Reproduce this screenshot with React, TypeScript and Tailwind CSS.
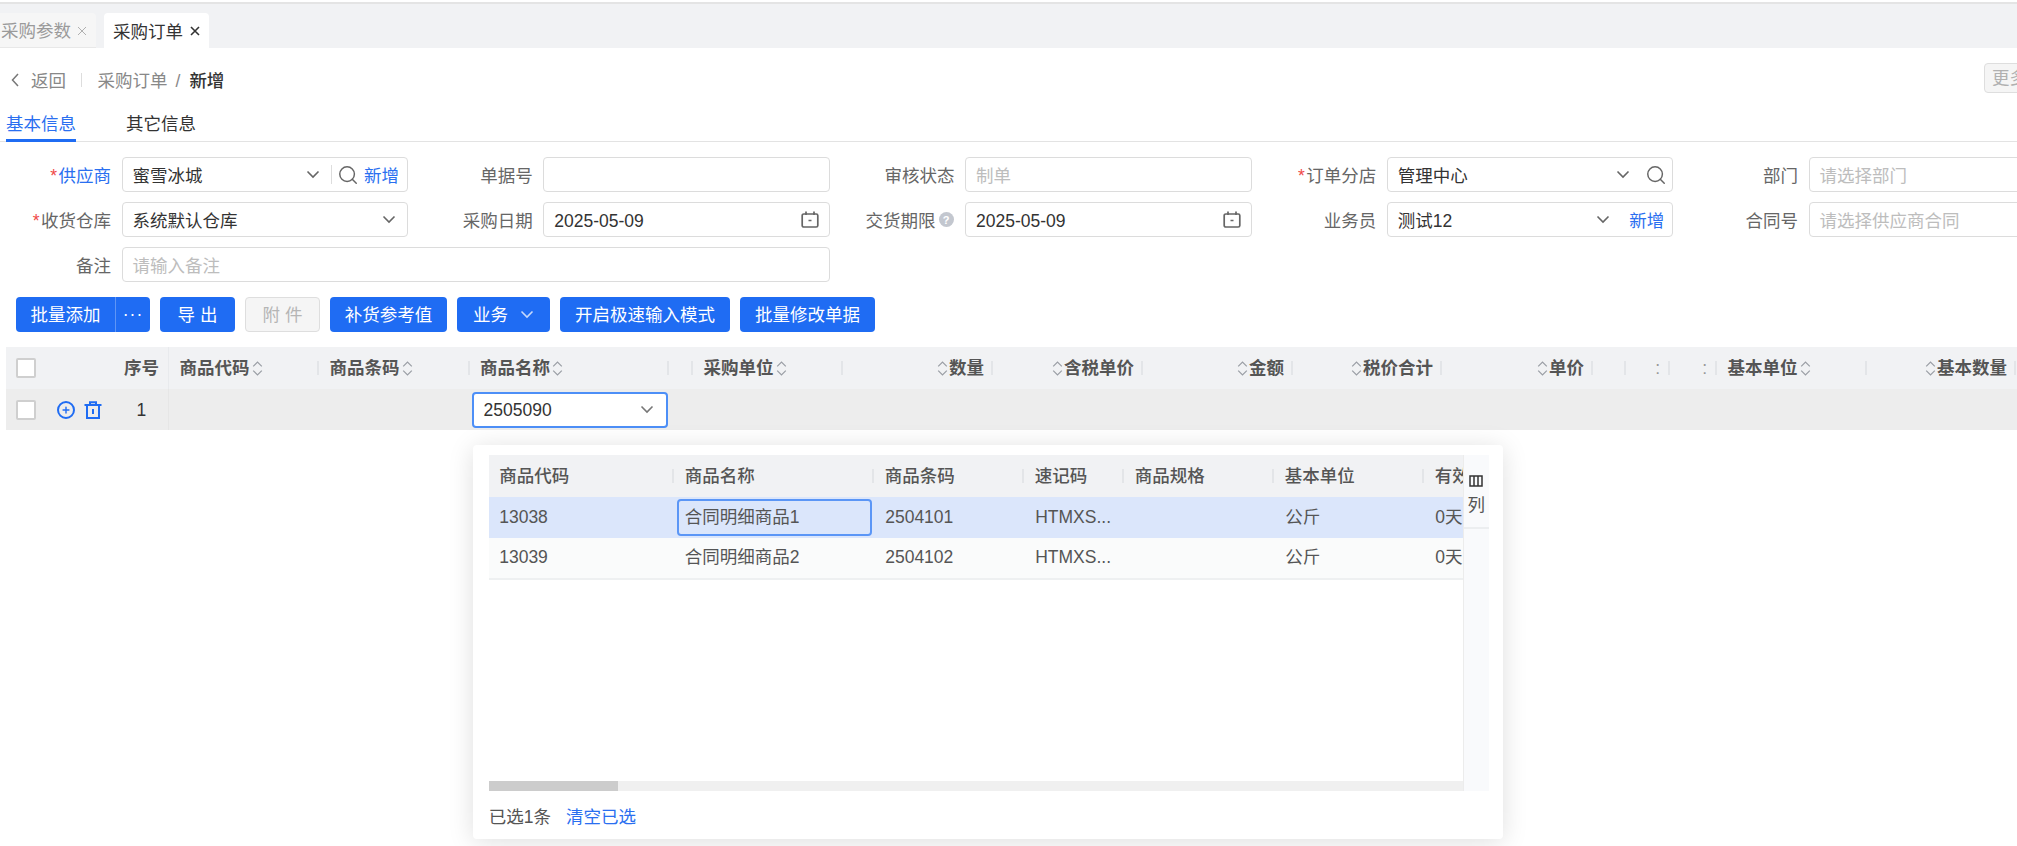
import React from "react";
import { Search, Plus } from "lucide-react";

const Chev = ({ className = "" }: { className?: string }) => (
  <svg viewBox="0 0 14 9" className={`w-[14px] h-[9px] shrink-0 ${className}`} fill="none" stroke="currentColor" strokeWidth="1.6">
    <path d="M1.5 1.5 7 7l5.5-5.5" />
  </svg>
);

const Sort = () => (
  <svg viewBox="0 0 11 17" className="w-[11px] h-[17px] shrink-0 text-[#9a9ea5]" fill="none" stroke="currentColor" strokeWidth="1.2">
    <path d="M1.2 6.4 5.5 2 9.8 6.4" />
    <path d="M1.2 10.6 5.5 15 9.8 10.6" />
  </svg>
);

const Calendar = () => (
  <svg viewBox="0 0 18 17" className="w-[18px] h-[17px] mb-[2px] shrink-0 text-[#666]" fill="none" stroke="currentColor" strokeWidth="1.7">
    <rect x="1.2" y="3" width="15.6" height="13" rx="1.6" />
    <path d="M5 0.5v3.5M13 0.5v3.5M7.5 9.5h3" />
  </svg>
);

const Lens = ({ className = "" }: { className?: string }) => (
  <Search className={`w-[22px] h-[22px] mb-[2px] shrink-0 ${className}`} strokeWidth={1.6} />
);

const X = ({ className = "" }: { className?: string }) => (
  <svg viewBox="0 0 10 10" className={`w-[10px] h-[10px] shrink-0 ${className}`} fill="none" stroke="currentColor">
    <path d="M1 1l8 8M9 1 1 9" />
  </svg>
);

const Checkbox = () => <div className="w-[20px] h-[20px] shrink-0 rounded-[2px] border-2 border-[#cfcfcf] bg-white" />;

const Input = ({ className = "", children }: { className?: string; children?: React.ReactNode }) => (
  <div className={`h-[35px] flex items-center rounded-[4px] border border-[#dcdcdc] bg-white pl-[10px] pt-[2px] text-[#333] ${className}`}>{children}</div>
);

const Placeholder = ({ children }: { children: React.ReactNode }) => <span className="text-[#bdbdbd]">{children}</span>;

const Field = ({ label, required, blue, hint, wide, children }: { label: string; required?: boolean; blue?: boolean; hint?: boolean; wide?: boolean; children?: React.ReactNode }) => (
  <div className={`flex items-center ${wide ? "col-span-2" : ""}`}>
    <div className={`w-[111px] pt-[2px] shrink-0 flex justify-end items-center whitespace-nowrap ${blue ? "text-[#2a6ff0]" : "text-[#666]"}`}>
      {required && <span className="text-[#f04848] mr-[1.5px]">*</span>}
      {label}
      {hint && (
        <span className="ml-[3px] mr-[1px] mb-[2px] w-[15px] h-[15px] rounded-full bg-[#c3c7cf] text-white text-[11px] font-bold flex items-center justify-center">?</span>
      )}
    </div>
    <div className={`ml-[10.5px] ${wide ? "w-[708px]" : "w-[286.5px]"} shrink-0`}>{children}</div>
  </div>
);

const Btn = ({ className = "", children }: { className?: string; children: React.ReactNode }) => (
  <div className={`h-[35px] shrink-0 rounded-[4px] bg-[#1f6cf3] text-white flex items-center justify-center whitespace-nowrap ${className}`}>{children}</div>
);

type Col = { w: string; label?: string; right?: boolean; glyph?: string };
const cols: Col[] = [
  { w: "w-[150px]", label: "商品代码" },
  { w: "w-[150.5px]", label: "商品条码" },
  { w: "w-[199.5px]", label: "商品名称" },
  { w: "w-[24px]" },
  { w: "w-[150px]", label: "采购单位" },
  { w: "w-[150px]", label: "数量", right: true },
  { w: "w-[150px]", label: "含税单价", right: true },
  { w: "w-[150px]", label: "金额", right: true },
  { w: "w-[149px]", label: "税价合计", right: true },
  { w: "w-[151px]", label: "单价", right: true },
  { w: "w-[33px]" },
  { w: "w-[44px]", glyph: ":" },
  { w: "w-[47px]", glyph: ":" },
  { w: "w-[149.5px]", label: "基本单位" },
  { w: "w-[149.5px]", label: "基本数量", right: true },
];

const Divider = () => <span className="w-[2px] h-[14px] shrink-0 bg-[#e3e5e8]" />;

const popCols = [
  { w: "w-[185.5px]", label: "商品代码" },
  { w: "w-[200px]", label: "商品名称" },
  { w: "w-[150px]", label: "商品条码" },
  { w: "w-[100px]", label: "速记码" },
  { w: "w-[150px]", label: "商品规格" },
  { w: "w-[150px]", label: "基本单位" },
  { w: "w-[150px]", label: "有效期" },
];

const PopRow = ({ code, name, bar, active }: { code: string; name: string; bar: string; active?: boolean }) => (
  <div className={`flex items-center text-[#555] ${active ? "h-[40.5px] bg-[#dbe6fb]" : "h-[42px] pb-[1px] bg-[#fafbfb] border-b-2 border-[#eef0f1]"}`}>
    <div className="w-[185.5px] shrink-0 pl-[10.5px]">{code}</div>
    <div className="w-[200px] shrink-0 h-full flex items-center">
      {active ? (
        <div className="mx-[2.5px] my-[1px] h-[37px] w-[197px] rounded-[4px] border-2 border-[#5b96f6] pl-[6px] flex items-center">{name}</div>
      ) : (
        <span className="pl-[10.5px]">{name}</span>
      )}
    </div>
    <div className="w-[150px] shrink-0 pl-[11px]">{bar}</div>
    <div className="w-[100px] shrink-0 pl-[11px]">HTMXS...</div>
    <div className="w-[150px] shrink-0" />
    <div className="w-[150px] shrink-0 pl-[11px]">公斤</div>
    <div className="w-[150px] shrink-0 pl-[11px]">0天</div>
  </div>
);

export default function App() {
  return (
    <div className="relative w-[2017px] h-[846px] overflow-hidden bg-white pt-[2px] text-[17.5px] leading-[24px] text-[#333] font-['Liberation_Sans','Noto_Sans_CJK_SC',sans-serif]">
      {/* page tabs */}
      <div className="h-[46px] border-t-2 border-[#e4e4e4] bg-[#f1f2f4] flex items-end">
        <div className="h-[35px] w-[96px] pt-[2px] rounded-tr-[4px] bg-[#f6f6f6] border-b border-[#e8e8e8] flex items-center pl-[1px] text-[#9a9a9a] whitespace-nowrap">
          采购参数<X className="ml-[6px] text-[#b0b0b0]" />
        </div>
        <div className="ml-[7.5px] h-[35px] w-[105px] pt-[2px] rounded-t-[4px] bg-white flex items-center pl-[9.5px] text-[#333] whitespace-nowrap">
          采购订单<X className="ml-[7px] mb-[2px] text-[#333] stroke-[1.6]" />
        </div>
      </div>

      {/* breadcrumb */}
      <div className="h-[64px] flex items-center pl-[11px]">
        <svg viewBox="0 0 8 14" className="w-[8px] h-[14px] shrink-0 text-[#777]" fill="none" stroke="currentColor" strokeWidth="1.5">
          <path d="M7 1 1.5 7 7 13" />
        </svg>
        <span className="ml-[12px] pt-[2px] text-[#888]">返回</span>
        <span className="ml-[14.5px] w-px h-[14px] bg-[#ddd]" />
        <span className="ml-[16px] pt-[2px] text-[#888]">采购订单</span>
        <span className="ml-[8px] pt-[2px] text-[#888]">/</span>
        <span className="ml-[9px] pt-[2px] text-[#333] font-medium">新增</span>
        <div className="ml-auto mr-[-27px] mb-[4px] w-[60px] h-[30px] shrink-0 rounded-[4px] border border-[#dedede] bg-[#f5f5f5] text-[#b0b0b0] flex items-center pl-[7px] whitespace-nowrap">更多</div>
      </div>

      {/* section tabs */}
      <div className="h-[30px] flex border-b border-[#e3e3e3] pl-[6px]">
        <div className="h-[30px] w-[70px] border-b-[3px] border-[#1f6cf3] text-[#2a6ff0] whitespace-nowrap">基本信息</div>
        <div className="ml-[50px] text-[#333] whitespace-nowrap">其它信息</div>
      </div>

      {/* form */}
      <div className="pt-[15px] grid grid-cols-[repeat(5,421.75px)] gap-y-[10px]">
        <Field label="供应商" required blue>
          <Input className="pr-[8px]">
            <span className="flex-1">蜜雪冰城</span>
            <Chev className="mb-[2px] text-[#666]" />
            <span className="ml-[11px] mb-[2px] w-px h-[19px] bg-[#ddd]" />
            <Lens className="ml-[5px] text-[#666]" />
            <span className="ml-[5px] text-[#2a6ff0] whitespace-nowrap">新增</span>
          </Input>
        </Field>
        <Field label="单据号"><Input /></Field>
        <Field label="审核状态"><Input><Placeholder>制单</Placeholder></Input></Field>
        <Field label="订单分店" required>
          <Input className="pr-[5px]">
            <span className="flex-1">管理中心</span>
            <Chev className="mb-[2px] text-[#666]" />
            <Lens className="ml-[15px] text-[#666]" />
          </Input>
        </Field>
        <Field label="部门"><Input><Placeholder>请选择部门</Placeholder></Input></Field>

        <Field label="收货仓库" required>
          <Input className="pr-[11px]">
            <span className="flex-1">系统默认仓库</span>
            <Chev className="mb-[2px] text-[#666]" />
          </Input>
        </Field>
        <Field label="采购日期">
          <Input className="pr-[10px]">
            <span className="flex-1">2025-05-09</span>
            <Calendar />
          </Input>
        </Field>
        <Field label="交货期限" hint>
          <Input className="pr-[10px]">
            <span className="flex-1">2025-05-09</span>
            <Calendar />
          </Input>
        </Field>
        <Field label="业务员">
          <Input className="pr-[8px]">
            <span className="flex-1">测试12</span>
            <Chev className="mb-[2px] text-[#666]" />
            <span className="ml-[19px] text-[#2a6ff0] whitespace-nowrap">新增</span>
          </Input>
        </Field>
        <Field label="合同号"><Input><Placeholder>请选择供应商合同</Placeholder></Input></Field>

        <Field label="备注" wide><Input><Placeholder>请输入备注</Placeholder></Input></Field>
      </div>

      {/* toolbar */}
      <div className="mt-[15px] pl-[16px] flex gap-[10px]">
        <Btn className="w-[134px] justify-start">
          <span className="w-[99px] text-center">批量添加</span>
          <span className="w-px h-full bg-[#5f95f5]" />
          <span className="flex-1 text-center tracking-[1px] leading-none">···</span>
        </Btn>
        <Btn className="w-[75px]">导 出</Btn>
        <Btn className="w-[75px] !bg-[#f5f5f5] border border-[#dedede] !text-[#b5b5b5]">附 件</Btn>
        <Btn className="w-[117px]">补货参考值</Btn>
        <Btn className="w-[93px]">业务<Chev className="ml-[12px] text-[#c6d9fb]" /></Btn>
        <Btn className="w-[170px]">开启极速输入模式</Btn>
        <Btn className="w-[135px]">批量修改单据</Btn>
      </div>

      {/* grid */}
      <div className="mt-[15px] ml-[6px]">
        <div className="flex h-[42px] items-center bg-[#f1f2f4] text-[#555] font-bold">
          <div className="w-[39.5px] shrink-0 flex items-center pl-[10px] h-full">
            <Checkbox />
            <span className="ml-[9px]"><Divider /></span>
          </div>
          <div className="w-[123.5px] shrink-0 h-full flex items-center justify-end pr-[9px] border-r border-[#e8eaed] whitespace-nowrap">序号</div>
          {cols.map((c, i) => (
            <div key={i} className={`${c.w} shrink-0 flex items-center h-full`}>
              <div className={`flex-1 flex items-center whitespace-nowrap overflow-hidden ${c.right ? "justify-end pr-[7px]" : "pl-[10.5px]"}`}>
                {c.glyph ? (
                  <span className="w-full text-right pr-[8px] text-[#999] font-normal">{c.glyph}</span>
                ) : c.label ? (
                  c.right ? (<><Sort /><span className="ml-[1px]">{c.label}</span></>) : (<><span className="mr-[2px]">{c.label}</span><Sort /></>)
                ) : null}
              </div>
              <Divider />
            </div>
          ))}
        </div>
        <div className="flex h-[41px] items-center bg-[#ededed]">
          <div className="w-[39.5px] shrink-0 flex items-center pl-[10px] h-full"><Checkbox /></div>
          <div className="w-[123.5px] shrink-0 h-full flex items-center border-r border-[#e6e6e6] pl-[11px]">
            <div className="w-[18px] h-[18px] rounded-full border-2 border-[#1f6cf3] text-[#1f6cf3] flex items-center justify-center">
              <Plus className="w-[10px] h-[10px]" strokeWidth={3.4} />
            </div>
            <svg viewBox="0 0 18 18" className="ml-[9px] w-[18px] h-[18px] shrink-0 text-[#1f6cf3]" fill="none" stroke="currentColor" strokeWidth="2">
              <path d="M0.5 4h17M6 4V1.2h6V4M3 4v13h12V4M9 8v5" />
            </svg>
            <span className="ml-[35px] text-[#333]">1</span>
          </div>
          {cols.map((c, i) => (
            <div key={i} className={`${c.w} shrink-0 h-full flex items-center`}>
              {c.label === "商品名称" && (
                <div className="ml-[2px] w-[196.5px] h-[36px] rounded-[4px] border-2 border-[#4d8ff7] bg-white flex items-center pl-[10px] pr-[12px] text-[#333]">
                  <span className="flex-1">2505090</span>
                  <Chev className="text-[#777]" />
                </div>
              )}
            </div>
          ))}
        </div>
      </div>

      {/* dropdown */}
      <div className="absolute left-[473px] top-[445px] w-[1030px] h-[394px] rounded-[4px] bg-white shadow-[0_3px_26px_rgba(0,0,0,0.13)] pt-[10px] pl-[15.7px] pr-[14.3px] flex flex-col">
        <div className="h-[336px] flex">
          <div className="w-[974px] shrink-0 flex flex-col overflow-hidden">
            <div className="flex-1 overflow-hidden">
              <div className="w-[1200px]">
                <div className="flex h-[42px] items-center bg-[#f1f2f4] text-[#555] font-medium">
                  {popCols.map((c) => (
                    <div key={c.label} className={`${c.w} shrink-0 flex items-center whitespace-nowrap`}>
                      <span className="flex-1 pl-[10.5px]">{c.label}</span>
                      <Divider />
                    </div>
                  ))}
                </div>
                <PopRow code="13038" name="合同明细商品1" bar="2504101" active />
                <PopRow code="13039" name="合同明细商品2" bar="2504102" />
              </div>
            </div>
            <div className="h-[10px] bg-[#f0f0f0]">
              <div className="w-[129px] h-full bg-[#cccccc]" />
            </div>
          </div>
          <div className="flex-1 bg-[#f9fafc] border-l border-[#ececec]">
            <div className="h-[74px] border-b-2 border-[#eceef0] flex flex-col items-center pt-[20px]">
              <svg viewBox="0 0 14 12" className="w-[14px] h-[12px] text-[#333]" fill="none" stroke="currentColor" strokeWidth="1.5">
                <path d="M1 1h12v10H1zM5 1v10M9 1v10" />
              </svg>
              <span className="mt-[6px] text-[#555]">列</span>
            </div>
          </div>
        </div>
        <div className="flex-1 flex items-center pt-[3px]">
          <span className="text-[#555]">已选1条</span>
          <span className="ml-[15px] text-[#2a6ff0]">清空已选</span>
        </div>
      </div>
    </div>
  );
}
